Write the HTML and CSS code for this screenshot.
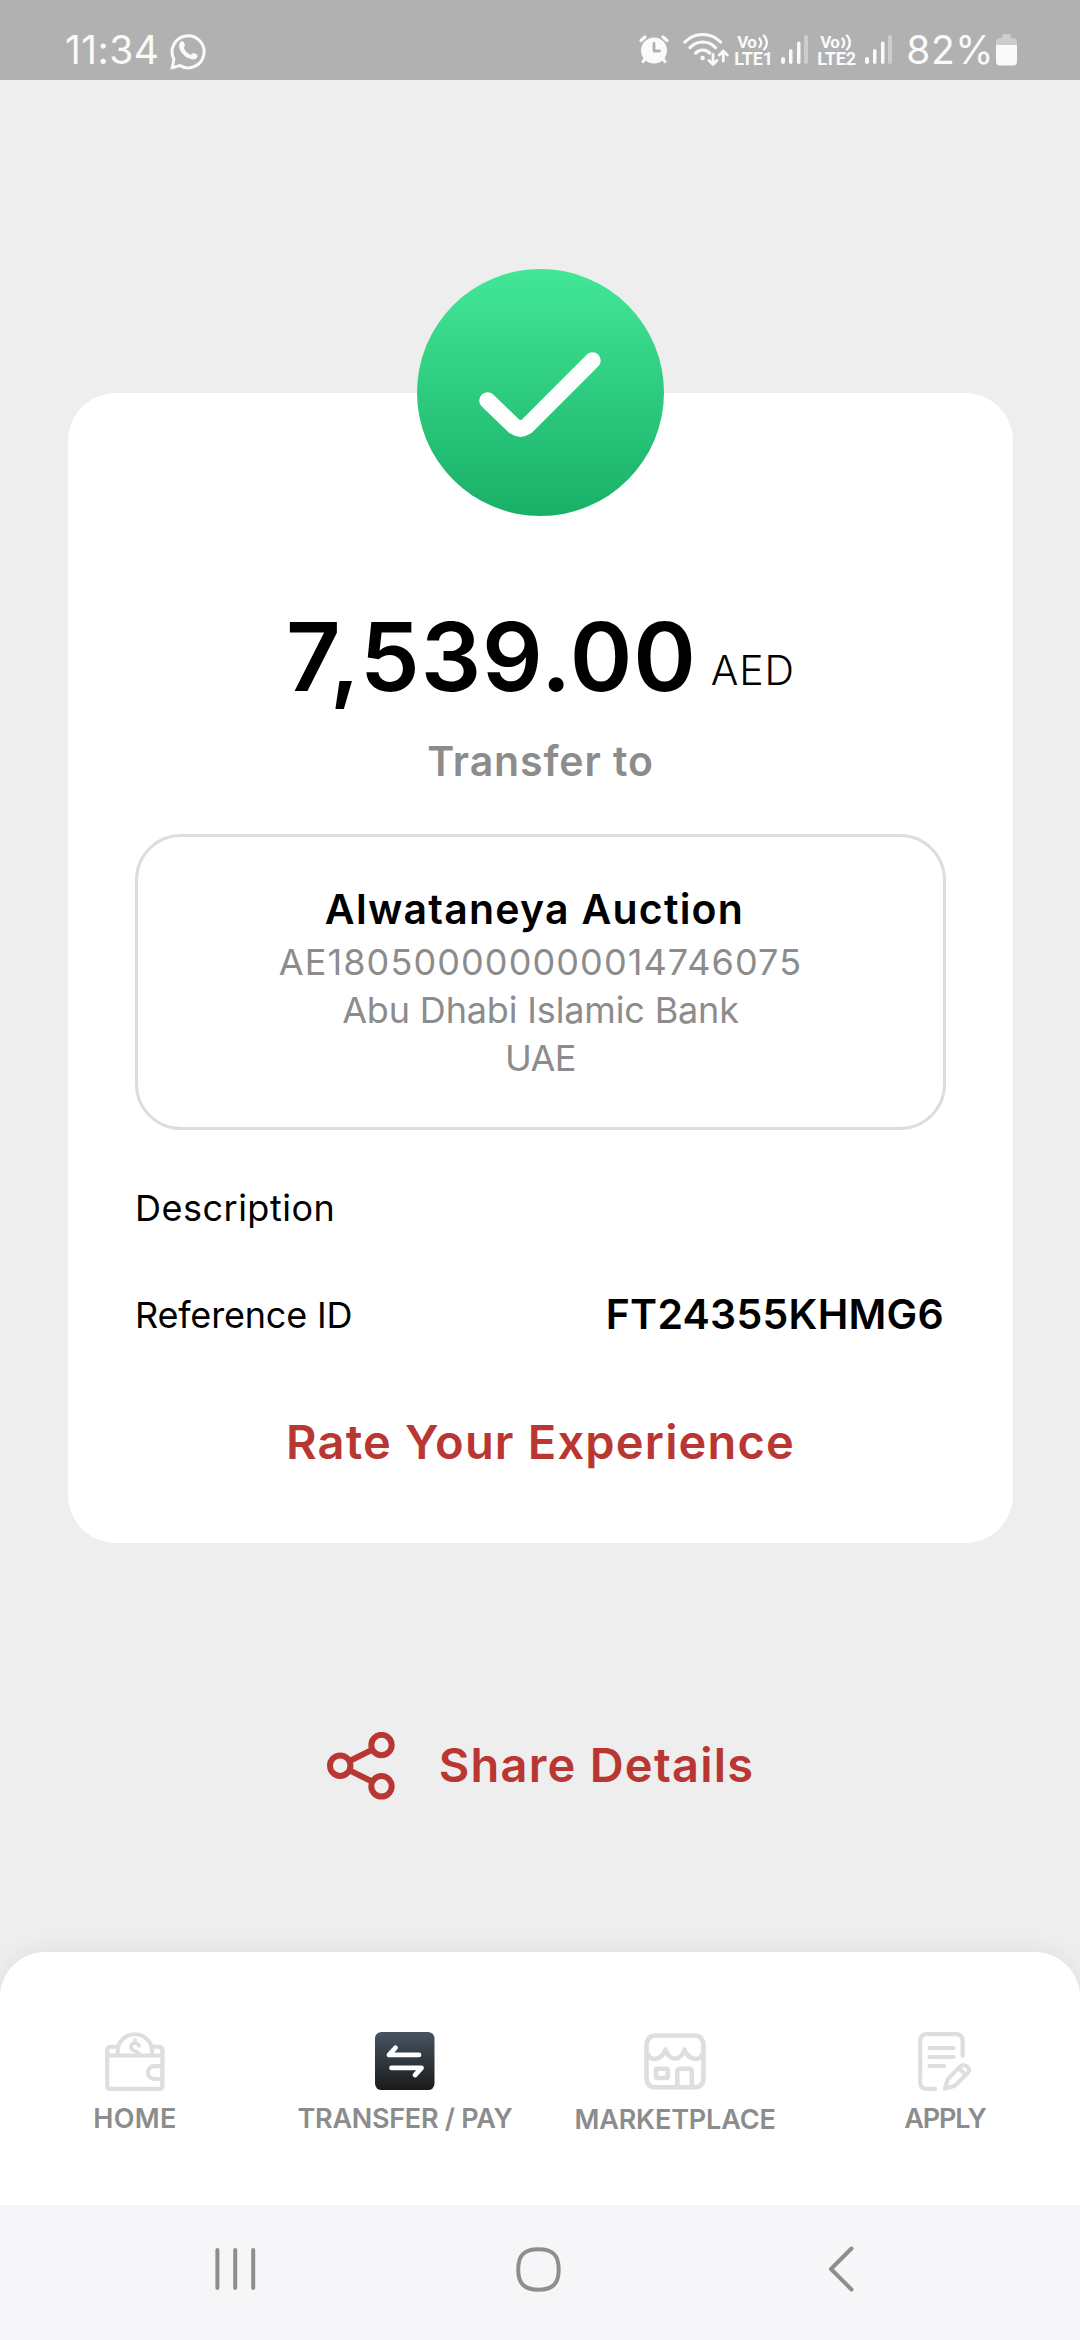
FILE: index.html
```html
<!DOCTYPE html>
<html lang="en">
<head>
<meta charset="utf-8">
<title>Transfer complete</title>
<link rel="stylesheet" href="styles.css">
</head>
<body>
<div class="screen">
  <header class="status">
    <span class="time">11:34</span>
    <svg class="whatsapp" width="37" height="38" viewBox="0 0 37 38" fill="none">
      <path d="M3.9 27.2A16 16 0 1 1 10 33.6L2.3 35.6Z" stroke="#fafafa" stroke-width="3"/>
      <path d="M10.7 9.7c1-.8 2.700-.7 3.200.5l1 2.800c.3 1-.9 2-1 3 1 3 3.500 5.500 6.500 6.800 1 0 2-2 3.200-1.800l3.200 1.400c1.200.7 1 2.500-.2 3.800-2 1.800-5 1.400-8 .1-4.500-2-8.300-6.200-9.300-10.800-.4-2.200 0-4.600 1.400-5.800Z" fill="#fafafa"/>
    </svg>
    <div class="indicators">
      <svg class="alarm" width="30" height="30" viewBox="0 0 30 30" fill="none">
        <circle cx="15" cy="15.500" r="13" fill="#fafafa"/>
        <path d="M2 5.500 6 2M28 5.500 24 2" stroke="#fafafa" stroke-width="3.200" stroke-linecap="round"/>
        <path d="M6 24 4 26.600M24 24l2 2.600" stroke="#fafafa" stroke-width="3" stroke-linecap="round"/>
        <path d="M15 8.500v7.500h5.500" stroke="#b1b1b1" stroke-width="2.800" stroke-linecap="round" stroke-linejoin="round"/>
      </svg>
      <svg class="wifi" width="46" height="35" viewBox="0 0 46 35" fill="none" stroke="#fafafa" stroke-linecap="round" stroke-linejoin="round">
        <path d="M2 10c9.500-10 26-10 35.500 0M7 15.600c7-7.500 18.500-7.500 25.500 0M12.700 21c4-4 10-4 14 0" stroke-width="3.200"/>
        <circle cx="19.600" cy="26" r="2.300" fill="#fafafa" stroke="none"/>
        <path d="M30 22.500v9.500M26 28.600l4 4 4-4M40.300 29v-9.500M36.300 23l4-4 4 4" stroke-width="2.800"/>
      </svg>
      <div class="lte">
        <span class="vo">Vo<svg width="11" height="17" viewBox="0 0 11 17" fill="none" stroke="#fafafa" stroke-width="2.300" stroke-linecap="round"><path d="M1.500 4.500c2 2.500 2 6 0 8.500M5.800 1.500c4 4 4 10.500 0 14"/></svg></span>
        <span class="sim">LTE1</span>
      </div>
      <svg class="bars" width="27" height="30" viewBox="0 0 27 30"><g fill="#fafafa"><rect x="0" y="22" width="4" height="7" rx="2"/><rect x="8" y="14" width="3.500" height="15" rx="1.700"/><rect x="16" y="6.500" width="3.500" height="22.500" rx="1.700"/></g><rect x="23" y="0" width="4" height="29" rx="1.800" fill="#cdcdcd"/></svg>
      <div class="lte second">
        <span class="vo">Vo<svg width="11" height="17" viewBox="0 0 11 17" fill="none" stroke="#fafafa" stroke-width="2.300" stroke-linecap="round"><path d="M1.500 4.500c2 2.500 2 6 0 8.500M5.800 1.500c4 4 4 10.500 0 14"/></svg></span>
        <span class="sim">LTE2</span>
      </div>
      <svg class="bars" width="27" height="30" viewBox="0 0 27 30"><g fill="#fafafa"><rect x="0" y="22" width="4" height="7" rx="2"/><rect x="8" y="14" width="3.500" height="15" rx="1.700"/><rect x="16" y="6.500" width="3.500" height="22.500" rx="1.700"/></g><rect x="23" y="0" width="4" height="29" rx="1.800" fill="#cdcdcd"/></svg>
      <span class="percent">82%</span>
      <svg class="battery" width="21" height="32" viewBox="0 0 21 32"><path d="M6 4V2.500Q6 0 8 0h5q2 0 2 2.500V4h2q4 0 4 4v4H0V8q0-4 4-4Z" fill="#cdcdcd"/><path d="M0 11h21v16.500q0 4-4 4H4q-4 0-4-4Z" fill="#fafafa"/></svg>
    </div>
  </header>

  <main class="content">
    <section class="card">
      <svg class="check" width="247" height="247" viewBox="0 0 247 247" fill="none">
        <defs><linearGradient id="green" x1="0" y1="0" x2="0" y2="1"><stop offset="0" stop-color="#43e797"/><stop offset="1" stop-color="#18b067"/></linearGradient></defs>
        <rect width="247" height="247" rx="123.500" fill="url(#green)"/>
        <path d="M70.500 131.500 97.500 157.500Q103.500 161.500 109.500 157.500L175.500 91.500" stroke="#fff" stroke-width="16.500" stroke-linecap="round" stroke-linejoin="round"/>
      </svg>
      <div class="amount"><span class="value">7,539.00</span><span class="currency">AED</span></div>
      <p class="caption">Transfer to</p>
      <div class="recipient">
        <p class="name">Alwataneya Auction</p>
        <p class="iban">AE180500000000014746075</p>
        <p class="bank">Abu Dhabi Islamic Bank</p>
        <p class="country">UAE</p>
      </div>
      <div class="row"><span class="desc">Description</span></div>
      <div class="row"><span class="label">Reference ID</span><span class="ref">FT24355KHMG6</span></div>
      <a class="rate">Rate Your Experience</a>
    </section>
    <a class="share">
      <svg width="68" height="68" viewBox="0 0 68 68" fill="none" stroke="#b93733" stroke-width="6">
        <circle cx="13.200" cy="33.700" r="10.200"/><circle cx="54.500" cy="13" r="10.200"/><circle cx="54.500" cy="54.300" r="10.200"/>
        <path d="M22 29.300 45.500 17.600M22 38.100 45.500 49.800"/>
      </svg>
      <span>Share Details</span>
    </a>
  </main>

  <nav class="tabs">
    <a class="tab home">
      <svg width="60" height="59" viewBox="0 0 60 61" preserveAspectRatio="none" fill="none" stroke="#dedede" stroke-width="4.200">
        <path d="M2.200 24.500V19q0-3.700 3.700-3.700H13M46.500 15.300h7.200q3.700 0 3.700 3.700v36.500q0 3.300-3.300 3.300H5.500q-3.300 0-3.300-3.300V24.300H57.400"/>
        <path d="M12.700 24V19.500a17.100 17.100 0 0 1 34.200 0V24"/>
        <path d="M57.400 35.300H49.500a6.600 6.600 0 0 0 0 13.200h7.900"/>
        <path d="M34.400 16Q34 11.500 30 11.300 26 11.500 25.800 15.500 26 18.500 30 19.700 33.500 20.700 34.500 24" stroke-width="3.700"/>
        <path d="M30 6.500v5" stroke-width="3.500"/>
      </svg>
      <span>HOME</span>
    </a>
    <a class="tab transfer">
      <svg width="60" height="58" viewBox="0 0 60 59" preserveAspectRatio="none" fill="none">
        <defs><linearGradient id="dark" x1="0" y1="0" x2="0" y2="1"><stop offset="0" stop-color="#465461"/><stop offset="1" stop-color="#1b1b1b"/></linearGradient></defs>
        <rect x="0" y="0" width="59.500" height="59" rx="6.500" fill="url(#dark)"/>
        <path d="M20.500 16 14 23.300H44M16.500 36.500H46.500L40 43.800" stroke="#fff" stroke-width="4.800" stroke-linecap="round" stroke-linejoin="round"/>
      </svg>
      <span>TRANSFER / PAY</span>
    </a>
    <a class="tab market">
      <svg width="62" height="57" viewBox="0 0 62 59" preserveAspectRatio="none" fill="none" stroke="#dedede" stroke-width="4.600" stroke-linejoin="round">
        <path d="M2.500 25V14Q2.500 2.500 12 2.500H50Q59.500 2.500 59.500 14V46Q59.500 56.200 50 56.200H12Q2.500 56.200 2.500 46Z"/>
        <path d="M4 22c2 7 13 7 17.500-4.500M21.500 17v.5c4.500 12 14.500 12 19 0V17M40.500 17.500C45 29 56 29 58 22" stroke-linecap="round"/>
        <rect x="12" y="37" width="11.800" height="9.500" rx="1.500"/>
        <path d="M33.300 56V40q0-3 3-3h8.400q3 0 3 3v16"/>
      </svg>
      <span>MARKETPLACE</span>
    </a>
    <a class="tab apply">
      <svg width="54" height="59" viewBox="0 0 54 61" preserveAspectRatio="none" fill="none" stroke="#dedede" stroke-width="4.200" stroke-linecap="round" stroke-linejoin="round">
        <path d="M44.600 24.500V9Q44.600 2.200 38 2.200H9Q2.200 2.200 2.200 9V52Q2.200 58.800 9 58.800H17.200"/>
        <path d="M11.500 16.500H35.500M11.500 25.800H35.500M11.500 35.200H26.200"/>
        <path d="M27 58.500 29.800 48.500 42.300 35.500Q45.500 32.700 49 35.500 52.500 39 49.800 42.300L37 55.500ZM41.500 38 47 43.500"/>
      </svg>
      <span>APPLY</span>
    </a>
  </nav>
  <footer class="system">
    <svg width="42" height="44" viewBox="0 0 42 44" stroke="#8e8e8e" stroke-width="4" stroke-linecap="round"><path d="M2.400 3V41M20.200 3V41M38.200 3V41"/></svg>
    <svg class="homekey" width="45" height="45" viewBox="0 0 45 45" fill="none" stroke="#8e8e8e" stroke-width="4"><path d="M22.500 2.200C36.500 2.200 42.700 8 42.700 22.500S36.500 42.700 22.500 42.700 2.200 37 2.200 22.500 8.500 2.200 22.500 2.200Z"/></svg>
    <svg class="backkey" width="27" height="46" viewBox="0 0 27 46" fill="none" stroke="#8e8e8e" stroke-width="4" stroke-linecap="round" stroke-linejoin="round"><path d="M23.500 2.500 3 23 23.500 43.500"/></svg>
  </footer>
</div>
</body>
</html>
```
FILE: styles.css
```css
* { box-sizing: border-box; }
body { margin: 0; font-family: Inter, "Open Sans", sans-serif; color: #000; }
p { margin: 0; }
svg { display: block; flex: none; }
span, p, a { white-space: nowrap; }

.screen {
  width: 1080px;
  height: 2340px;
  display: flex;
  flex-direction: column;
  background: #eee;
  overflow: hidden;
}

/* Status bar */
.status {
  height: 80px;
  background: #b1b1b1;
  color: #fafafa;
  display: flex;
  align-items: flex-start;
  padding: 32px 63px 0 65px;
}
.time { font-size: 39px; line-height: 36px; letter-spacing: .4px; width: 105px; }
.indicators { margin-left: auto; display: flex; align-items: flex-start; }
.alarm { margin: 3px 14px 0 0; }
.wifi { margin: 0 4px 0 0; }
.lte {
  width: 41px;
  margin-top: 2px;
  display: flex;
  flex-direction: column;
  font-family: Roboto, sans-serif;
  font-weight: 700;
}
.vo { display: flex; padding-left: 4px; font-size: 17px; line-height: 17px; letter-spacing: -.8px; }
.vo svg { margin-left: 2px; }
.sim { font-size: 18px; line-height: 16px; padding-left: 1px; letter-spacing: -.2px; }
.bars { margin: 3px 8px 0 7px; }
.second { width: 42px; }
.percent { font-size: 39px; line-height: 36px; letter-spacing: .5px; margin-left: 6px; }
.battery { margin: 2px 0 0 2px; }

/* Receipt */
.content { height: 1872px; padding: 313px 67px 0 68px; }
.card {
  height: 1150px;
  padding: 0 67px;
  background: #fff;
  border-radius: 48px;
  display: flex;
  flex-direction: column;
}
.check { margin: -124px auto 0; }
.amount {
  margin-top: 81px;
  height: 120px;
  display: flex;
  justify-content: center;
  gap: 14px;
}
.value { font-size: 95px; font-weight: 600; line-height: 120px; letter-spacing: .9px; }
.currency { font-size: 41px; font-weight: 300; line-height: 147px; letter-spacing: .9px; }
.caption {
  margin-top: 20px;
  text-align: center;
  font-size: 41px;
  font-weight: 600;
  line-height: 48px;
  letter-spacing: .9px;
  color: #8c8c8c;
}
.recipient {
  margin-top: 49px;
  height: 296px;
  padding-top: 43px;
  border: 3px solid #ddd;
  border-radius: 46px;
  text-align: center;
  font-size: 36px;
  font-weight: 400;
  line-height: 48px;
  color: #8c8c8c;
}
.name { font-size: 41px; font-weight: 600; line-height: 58px; letter-spacing: 1.24px; color: #000; padding-right: 12px; }
.iban { letter-spacing: 1.1px; }
.bank { letter-spacing: -.15px; }
.country { letter-spacing: -.6px; }
.row {
  margin-top: 48px;
  height: 60px;
  display: flex;
  justify-content: space-between;
  font-size: 36px;
  line-height: 60px;
}
.row + .row { margin-top: 47px; }
.desc { letter-spacing: .5px; }
.label { letter-spacing: -.18px; }
.ref { font-size: 41px; font-weight: 600; line-height: 58px; letter-spacing: .26px; padding-right: 2px; }
.rate {
  margin-top: 67px;
  text-align: center;
  font-size: 47px;
  font-weight: 600;
  line-height: 60px;
  letter-spacing: 1.19px;
  color: #b93733;
}
.share {
  margin-top: 189px;
  display: flex;
  justify-content: center;
  gap: 44px;
  font-size: 47px;
  font-weight: 600;
  line-height: 66px;
  letter-spacing: 1.23px;
  color: #b93733;
}

/* Bottom tabs */
.tabs {
  height: 253px;
  padding: 80px 0 0;
  background: #fff;
  border-radius: 45px 45px 0 0;
  box-shadow: 0 0 26px rgba(0, 0, 0, .07);
  display: grid;
  grid-template-columns: 270px 270px 270px 270px;
}
.tab {
  display: flex;
  flex-direction: column;
  align-items: center;
  font-size: 27px;
  font-weight: 600;
  color: #8c8c8c;
}
.tab span { line-height: 30px; margin-top: 13px; }
.home span { letter-spacing: .4px; }
.transfer span { letter-spacing: -.28px; margin-top: 14px; }
.market { padding-top: 1px; }
.market span { letter-spacing: -.15px; margin-top: 15px; }
.apply span { letter-spacing: -1.12px; }

/* System keys, stacked above the tab bar's shadow */
.system {
  position: relative;
  height: 135px;
  background: #f6f6f8;
  display: flex;
  align-items: center;
  padding: 0 0 7px 215px;
}
.homekey { margin-left: 259px; }
.backkey { margin-left: 267px; }
```
